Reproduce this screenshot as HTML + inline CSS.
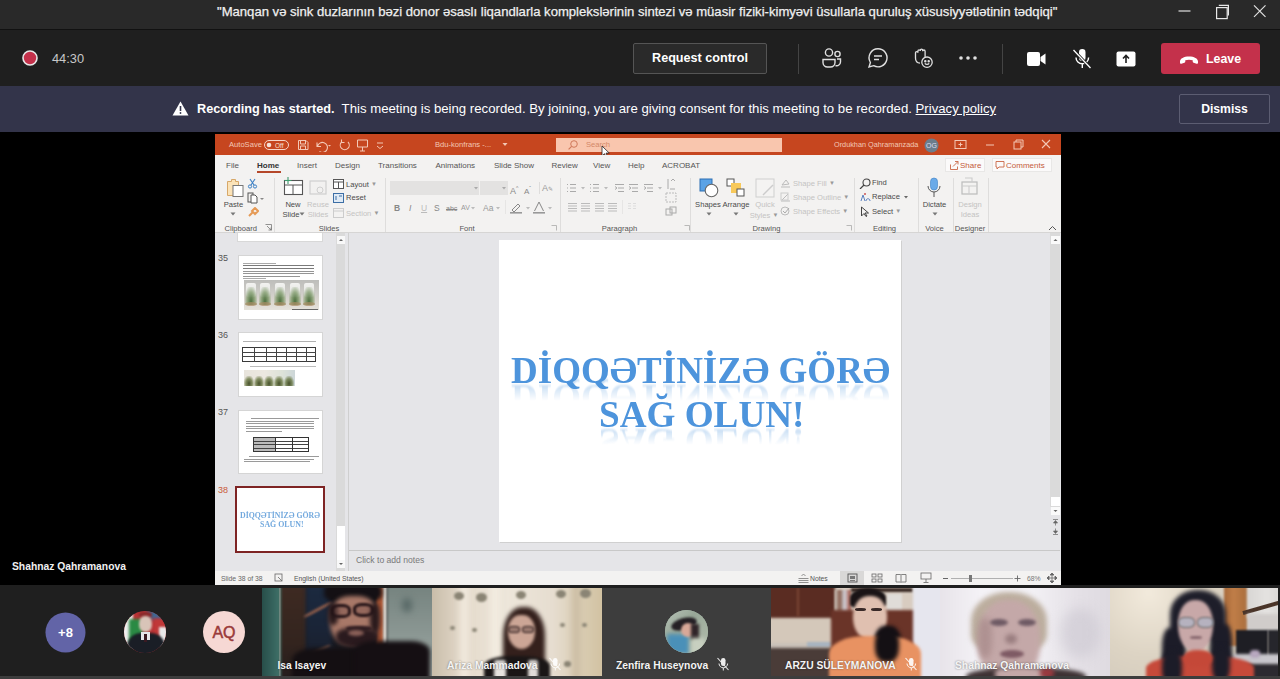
<!DOCTYPE html>
<html><head><meta charset="utf-8"><style>
*{margin:0;padding:0;box-sizing:border-box}
html,body{width:1280px;height:679px;overflow:hidden;background:#000;font-family:"Liberation Sans",sans-serif}
.a{position:absolute}
.t{white-space:nowrap}
svg{display:block}
.bl{filter:blur(.45px)}

#title{left:0;top:0;width:1280px;height:29px;background:#292929;color:#e6e6e6;font-size:14px}
#ctrl{left:0;top:29px;width:1280px;height:57px;background:#1f1f1f;border-top:1px solid #111}
#banner{left:0;top:86px;width:1280px;height:46px;background:#33344a;color:#fff;font-size:14px}
</style></head><body>
<div id="title" class="a">
  <div id="ttl" class="a" style="left:217px;top:4px;white-space:nowrap;font-size:13.1px;color:#f0f0f0;-webkit-text-stroke:.25px #f0f0f0">"Manqan və sink duzlarının bəzi donor əsaslı liqandlarla komplekslərinin sintezi və müasir fiziki-kimyəvi üsullarla quruluş xüsusiyyətlətinin tədqiqi"</div>
  <svg class="a" style="left:1176px;top:0px" width="20" height="20"><path d="M2.5 11h12" stroke="#e0e0e0" stroke-width="1.2"/></svg>
  <svg class="a" style="left:1214px;top:2px" width="20" height="20"><rect x="2.6" y="5.6" width="10.6" height="11" fill="none" stroke="#e8e8e8" stroke-width="1.2"/><path d="M4.8 3.4h9.6v10" fill="none" stroke="#e8e8e8" stroke-width="1.2"/></svg>
  <svg class="a" style="left:1252px;top:3px" width="16" height="16"><path d="M2 2.3l11.5 11.5M13.5 2.3L2 13.8" stroke="#e0e0e0" stroke-width="1.2"/></svg>
</div>
<div id="ctrl" class="a">
  <svg class="a" style="left:21px;top:19px" width="18" height="18"><circle cx="9" cy="9" r="7" fill="#c4314b" stroke="#e8e8e8" stroke-width="1.6"/></svg>
  <div class="a" style="left:52px;top:21px;font-size:12.8px;color:#c8c8c8">44:30</div>
  <div id="reqbtn" class="a" style="left:633px;top:13px;width:134px;height:31px;border:1px solid #555;background:#2a2a2a;border-radius:2px;color:#fff;font-weight:bold;font-size:12.6px;text-align:center;line-height:29px">Request control</div>
  <div class="a" style="left:798px;top:14px;width:1px;height:30px;background:#444"></div>
  <!-- participants -->
  <svg class="a" style="left:820px;top:16px" width="24" height="24" fill="none" stroke="#e0e0e0" stroke-width="1.4"><circle cx="9" cy="6.5" r="3.6"/><circle cx="17.5" cy="8" r="2.6"/><path d="M3 13.5h12v3a4.5 4.5 0 0 1-4.5 4.5h-3A4.5 4.5 0 0 1 3 16.5z"/><path d="M17 13h3.5v3a3.8 3.8 0 0 1-5 3.5"/></svg>
  <!-- chat -->
  <svg class="a" style="left:866px;top:16px" width="24" height="24" fill="none" stroke="#e0e0e0" stroke-width="1.4"><path d="M12 2.8a9 9 0 1 1-4.3 16.9L3 21l1.4-4.5A9 9 0 0 1 12 2.8z"/><path d="M8 10h8M8 13.5h5"/></svg>
  <!-- reactions -->
  <svg class="a" style="left:911px;top:16px" width="24" height="24" fill="none" stroke="#e0e0e0" stroke-width="1.3"><path d="M4.5 12V6.8a1.2 1.2 0 0 1 2.4 0V5a1.2 1.2 0 0 1 2.4 0V4.4a1.2 1.2 0 0 1 2.4 0V5.2a1.2 1.2 0 0 1 2.4 0V11"/><path d="M4.5 12c0 3 1.6 5 4.5 5.2"/><circle cx="16" cy="16.2" r="5.2"/><circle cx="14.3" cy="15.2" r=".6" fill="#e0e0e0"/><circle cx="17.7" cy="15.2" r=".6" fill="#e0e0e0"/><path d="M13.8 17.3c1.1 1.3 3.3 1.3 4.4 0"/></svg>
  <!-- more -->
  <svg class="a" style="left:956px;top:16px" width="24" height="24" fill="#e0e0e0"><circle cx="5" cy="12" r="1.8"/><circle cx="12" cy="12" r="1.8"/><circle cx="19" cy="12" r="1.8"/></svg>
  <div class="a" style="left:1002px;top:14px;width:1px;height:30px;background:#444"></div>
  <!-- camera -->
  <svg class="a" style="left:1024px;top:17px" width="24" height="24" fill="#fff"><rect x="3" y="5" width="13" height="14" rx="2"/><path d="M16.5 10l5-3.5v11l-5-3.5z"/></svg>
  <!-- mic off -->
  <svg class="a" style="left:1070px;top:17px" width="24" height="24"><rect x="9" y="2" width="6.5" height="12" rx="3.2" fill="#fff"/><path d="M6 10.5a6.3 6.3 0 0 0 12.6 0M12.3 17v4" fill="none" stroke="#fff" stroke-width="1.4"/><path d="M3.5 3l17 18" stroke="#1f1f1f" stroke-width="3"/><path d="M3.5 3l17 18" stroke="#fff" stroke-width="1.3"/></svg>
  <!-- share -->
  <svg class="a" style="left:1114px;top:17px" width="24" height="24"><rect x="2.5" y="4.5" width="19" height="15" rx="2" fill="#fff"/><path d="M12 16V9M9 11.5l3-3 3 3" fill="none" stroke="#1f1f1f" stroke-width="1.6"/></svg>
  <div id="leave" class="a" style="left:1161px;top:13px;width:99px;height:31px;background:#c4314b;border-radius:3px;color:#fff;font-weight:bold;font-size:12.4px;line-height:31px">
    <svg class="a" style="left:17px;top:8px" width="22" height="16"><path d="M2 10.5c0-3 4-5 9-5s9 2 9 5v1.3c0 .8-.7 1.2-1.4 1l-3-1c-.6-.2-.9-.7-.9-1.3V9.2c-1.1-.3-2.4-.5-3.7-.5s-2.6.2-3.7.5v1.3c0 .6-.3 1.1-.9 1.3l-3 1c-.7.2-1.4-.2-1.4-1z" fill="#fff"/></svg>
    <span class="a" style="left:45px;top:1px">Leave</span>
  </div>
</div>
<div id="banner" class="a">
  <svg class="a" style="left:172px;top:15px" width="17" height="15"><path d="M8.5 0.5L16.5 14.5H0.5z" fill="#fff"/><path d="M8.5 5v5" stroke="#33344a" stroke-width="1.6"/><circle cx="8.5" cy="12" r=".9" fill="#33344a"/></svg>
  <div id="btxt" class="a" style="left:197px;top:15px;white-space:nowrap;font-size:13.2px"><b style="font-size:12.7px">Recording has started.</b>&nbsp; This meeting is being recorded. By joining, you are giving consent for this meeting to be recorded. <u>Privacy policy</u></div>
  <div class="a" style="left:1179px;top:8px;width:91px;height:30px;border:1px solid #5c5d72;border-radius:2px;color:#fff;font-weight:bold;font-size:12.2px;text-align:center;line-height:28px">Dismiss</div>
</div>

<div class="a" style="left:0px;top:132px;width:1280px;height:453px;background:#000;"></div><div class="a t" style="left:12px;top:560.0px;font-size:10.3px;line-height:14px;color:#f0f0f0;font-weight:bold;">Shahnaz Qahramanova</div><div class="a" style="left:215px;top:134px;width:846px;height:451px;background:#e5e5e8;"></div><div class="a" style="left:215px;top:134px;width:846px;height:21px;background:#c6461f;"></div><div class="a t" style="left:229px;top:140.0px;font-size:7.6px;line-height:10px;color:#f3c8b6;font-weight:normal;">AutoSave</div><div class="a" style="left:264px;top:140px;width:25px;height:10px;border:1px solid #f6d5c8;border-radius:6px"></div><svg class="a" style="left:266px;top:142px;" width="6" height="6" viewBox="0 0 6 6"><circle cx="3" cy="3" r="2.3" fill="#f6e0d6"/></svg><div class="a t" style="left:275px;top:140.5px;font-size:6.5px;line-height:9px;color:#f6e0d6;font-weight:normal;">Off</div><svg class="a" style="left:297px;top:139px;" width="12" height="12" viewBox="0 0 12 12"><path d="M1.5 1.5h7.5l2 2v7h-9.5z M3.5 1.5v3.5h5v-3.5 M3.5 10.5v-3.5h5v3.5" fill="none" stroke="#f3c8b6" stroke-width="1"/></svg><svg class="a" style="left:314px;top:138px;" width="24" height="14" viewBox="0 0 24 14"><path d="M3 4.5v4h4 M3.5 8.5a5 5 0 1 1 2 5" fill="none" stroke="#f3c8b6" stroke-width="1.1"/><path d="M14 7h3l-1.5 1.5z" fill="#f3c8b6"/></svg><svg class="a" style="left:338px;top:138px;" width="13" height="14" viewBox="0 0 13 14"><path d="M10 4a4.5 4.5 0 1 1-6.5 0 M3.5 1.5v3h3" fill="none" stroke="#f3c8b6" stroke-width="1.1"/></svg><svg class="a" style="left:356px;top:138px;" width="13" height="14" viewBox="0 0 13 14"><path d="M1.5 2h10v7h-10z M6.5 9v4 M4 13h5" fill="none" stroke="#f3c8b6" stroke-width="1"/></svg><svg class="a" style="left:375px;top:140px;" width="10" height="10" viewBox="0 0 10 10"><path d="M2 3h6 M2 6l3 2.5 3-2.5" fill="none" stroke="#f3c8b6" stroke-width="1"/></svg><div class="a t" style="left:435px;top:140.0px;font-size:7.6px;line-height:10px;color:#f3c8b6;font-weight:normal;">Bdu-konfrans -...</div><svg class="a" style="left:502px;top:142px;" width="6" height="5" viewBox="0 0 6 5"><path d="M0.5 1h5l-2.5 3z" fill="#f3c8b6"/></svg><div class="a" style="left:556px;top:138px;width:226px;height:14px;background:#f9c6ae;"></div><svg class="a" style="left:567px;top:139px;" width="12" height="12" viewBox="0 0 12 12"><circle cx="7" cy="5" r="3.3" fill="none" stroke="#d0795a" stroke-width="1"/><path d="M4.6 7.4l-3 3" stroke="#d0795a" stroke-width="1.1"/></svg><div class="a t" style="left:586px;top:140.0px;font-size:7.6px;line-height:10px;color:#d38868;font-weight:normal;">Search</div><svg class="a" style="left:601px;top:145px;" width="9" height="13" viewBox="0 0 9 13"><path d="M1 1v10l2.5-2.3 1.8 3.8 1.5-.7-1.8-3.7h3.3z" fill="#fff" stroke="#222" stroke-width=".8"/></svg><div class="a t" style="left:834px;top:140.0px;font-size:7.3px;line-height:10px;color:#f3c8b6;font-weight:normal;">Ordukhan Qahramanzada</div><svg class="a" style="left:924px;top:138px;" width="15" height="15" viewBox="0 0 15 15"><circle cx="7.5" cy="7.5" r="7" fill="#6c7d8c"/><text x="7.5" y="10.3" font-size="7" text-anchor="middle" fill="#dde" font-family="Liberation Sans">OG</text></svg><svg class="a" style="left:954px;top:139px;" width="13" height="11" viewBox="0 0 13 11"><rect x="1" y="1.5" width="11" height="8" fill="none" stroke="#f3c8b6" stroke-width="1"/><path d="M6.5 3.5v4 M4.5 5.5h4" stroke="#f3c8b6" stroke-width="1"/></svg><svg class="a" style="left:984px;top:139px;" width="12" height="11" viewBox="0 0 12 11"><path d="M2 6h8" stroke="#f3c8b6" stroke-width="1"/></svg><svg class="a" style="left:1012px;top:139px;" width="12" height="11" viewBox="0 0 12 11"><rect x="2" y="3" width="7" height="7" fill="none" stroke="#f3c8b6" stroke-width="1"/><path d="M4 3v-2h7v7h-2" fill="none" stroke="#f3c8b6" stroke-width="1"/></svg><svg class="a" style="left:1040px;top:139px;" width="12" height="11" viewBox="0 0 12 11"><path d="M2 1l8 8 M10 1l-8 8" stroke="#f3c8b6" stroke-width="1.1"/></svg><div class="a" style="left:215px;top:155px;width:846px;height:78px;background:#f3f2f1;"></div><div class="a" style="left:215px;top:232px;width:846px;height:1px;background:#d6d5d4;"></div><div class="a t" style="left:226px;top:159.5px;font-size:8px;line-height:11px;color:#555;font-weight:normal;">File</div><div class="a t" style="left:257px;top:159.5px;font-size:8px;line-height:11px;color:#333;font-weight:bold;">Home</div><div class="a t" style="left:297px;top:159.5px;font-size:8px;line-height:11px;color:#555;font-weight:normal;">Insert</div><div class="a t" style="left:335px;top:159.5px;font-size:8px;line-height:11px;color:#555;font-weight:normal;">Design</div><div class="a t" style="left:378px;top:159.5px;font-size:8px;line-height:11px;color:#555;font-weight:normal;">Transitions</div><div class="a t" style="left:435.5px;top:159.5px;font-size:8px;line-height:11px;color:#555;font-weight:normal;">Animations</div><div class="a t" style="left:494px;top:159.5px;font-size:8px;line-height:11px;color:#555;font-weight:normal;">Slide Show</div><div class="a t" style="left:551.5px;top:159.5px;font-size:8px;line-height:11px;color:#555;font-weight:normal;">Review</div><div class="a t" style="left:593px;top:159.5px;font-size:8px;line-height:11px;color:#555;font-weight:normal;">View</div><div class="a t" style="left:628px;top:159.5px;font-size:8px;line-height:11px;color:#555;font-weight:normal;">Help</div><div class="a t" style="left:662px;top:159.5px;font-size:8px;line-height:11px;color:#555;font-weight:normal;">ACROBAT</div><div class="a" style="left:257px;top:171px;width:24px;height:2px;background:#b5472a;"></div><div class="a" style="left:945px;top:158px;width:40px;height:14px;background:#fbfafa;border:1px solid #e8e7e6"></div><svg class="a" style="left:949px;top:160px;" width="10" height="10" viewBox="0 0 10 10"><path d="M1.5 4.5v5h7v-3 M4 6.5l5-5 M6 1.5h3v3" fill="none" stroke="#c96646" stroke-width=".9"/></svg><div class="a t" style="left:960px;top:159.5px;font-size:8px;line-height:11px;color:#c45a3a;font-weight:normal;">Share</div><div class="a" style="left:992px;top:158px;width:60px;height:14px;background:#fbfafa;border:1px solid #e8e7e6"></div><svg class="a" style="left:995px;top:160px;" width="10" height="10" viewBox="0 0 10 10"><path d="M1 1.5h8v5.5h-5l-2 2v-2h-1z" fill="none" stroke="#c96646" stroke-width=".9"/></svg><div class="a t" style="left:1006px;top:159.5px;font-size:8px;line-height:11px;color:#c45a3a;font-weight:normal;">Comments</div><svg class="a" style="left:225px;top:178px;" width="20" height="20" viewBox="0 0 20 20"><path d="M2.5 3.5h4v-2h4v2h3v14h-11z" fill="#fbe3b8" stroke="#d7a869" stroke-width="1"/><rect x="8" y="7.5" width="10" height="11" fill="#fff" stroke="#777" stroke-width="1"/></svg><div class="a t" style="left:173.5px;width:120px;text-align:center;top:198.5px;font-size:7.6px;line-height:12px;color:#4a4a4a">Paste</div><svg class="a" style="left:230px;top:212px;" width="6" height="4" viewBox="0 0 6 4"><path d="M0.5 0.5h5l-2.5 3z" fill="#777"/></svg><svg class="a" style="left:247px;top:178px;" width="11" height="11" viewBox="0 0 11 11"><path d="M3 1l4 6 M8 1l-4 6" stroke="#3a7fc4" stroke-width="1.1" fill="none"/><circle cx="3" cy="8.5" r="1.6" fill="none" stroke="#3a7fc4"/><circle cx="8" cy="8.5" r="1.6" fill="none" stroke="#3a7fc4"/></svg><svg class="a" style="left:247px;top:192px;" width="18" height="12" viewBox="0 0 18 12"><rect x="1" y="1" width="5" height="9" fill="none" stroke="#555" stroke-width="1"/><path d="M4 3h4l2 2v6h-6z" fill="#fff" stroke="#555" stroke-width="1"/><path d="M13 6h4l-2 2z" fill="#888"/></svg><svg class="a" style="left:247px;top:207px;" width="12" height="11" viewBox="0 0 12 11"><path d="M2 9l4-4 M5 4l3-3 3 3-3 3z" stroke="#e59a55" stroke-width="2" fill="none"/></svg><div class="a t" style="left:224.5px;top:224.0px;font-size:7.6px;line-height:10px;color:#555;font-weight:normal;">Clipboard</div><svg class="a" style="left:265px;top:224px;" width="7" height="7" viewBox="0 0 7 7"><path d="M.5 .5h6v6 M2 2l4 4 M6 3.5v2.5h-2.5" fill="none" stroke="#777" stroke-width=".8"/></svg><div class="a" style="left:274px;top:178px;width:1px;height:54px;background:#dedddc;"></div><svg class="a" style="left:283px;top:176px;" width="21" height="20" viewBox="0 0 21 20"><rect x="1.5" y="4.5" width="18" height="14" fill="#fff" stroke="#555" stroke-width="1.1"/><path d="M1.5 9h18 M10 9v9.5" stroke="#555" stroke-width="1"/><path d="M5 1v7 M1.5 4.5h7" stroke="#3f9c6e" stroke-width="1.1"/></svg><div class="a t" style="left:233px;width:120px;text-align:center;top:198.5px;font-size:7.6px;line-height:12px;color:#4a4a4a">New</div><div class="a t" style="left:231px;width:120px;text-align:center;top:208.5px;font-size:7.6px;line-height:12px;color:#4a4a4a">Slide</div><svg class="a" style="left:299px;top:212px;" width="6" height="4" viewBox="0 0 6 4"><path d="M0.5 0.5h5l-2.5 3z" fill="#777"/></svg><svg class="a" style="left:309px;top:180px;" width="19" height="16" viewBox="0 0 19 16"><rect x="1" y="1" width="16" height="13" fill="#f2f1f0" stroke="#cfcfcf" stroke-width="1.2"/><circle cx="11" cy="10" r="3" fill="none" stroke="#cfcfcf"/></svg><div class="a t" style="left:258px;width:120px;text-align:center;top:198.5px;font-size:7.6px;line-height:12px;color:#c4c3c2">Reuse</div><div class="a t" style="left:258px;width:120px;text-align:center;top:208.5px;font-size:7.6px;line-height:12px;color:#c4c3c2">Slides</div><svg class="a" style="left:333px;top:179px;" width="11" height="10" viewBox="0 0 11 10"><rect x=".5" y=".5" width="10" height="9" fill="#fff" stroke="#555"/><path d="M.5 3h10 M5.5 3v6.5" stroke="#555"/></svg><div class="a t" style="left:346px;top:179.0px;font-size:7.6px;line-height:10px;color:#4a4a4a;font-weight:normal;">Layout <span style="font-size:6px;color:#999;vertical-align:1px">▼</span></div><svg class="a" style="left:333px;top:193px;" width="11" height="10" viewBox="0 0 11 10"><rect x=".5" y=".5" width="10" height="9" fill="#dfeaf5" stroke="#3c6ea5"/><path d="M3 3v4 M6 3h3" stroke="#3c6ea5"/></svg><div class="a t" style="left:346px;top:193.0px;font-size:7.6px;line-height:10px;color:#4a4a4a;font-weight:normal;">Reset</div><svg class="a" style="left:333px;top:208px;" width="11" height="10" viewBox="0 0 11 10"><rect x=".5" y=".5" width="10" height="9" fill="none" stroke="#ccc"/><path d="M.5 3h10" stroke="#ccc"/></svg><div class="a t" style="left:346px;top:208.0px;font-size:7.6px;line-height:10px;color:#c4c3c2;font-weight:normal;">Section <span style="font-size:6px;color:#999;vertical-align:1px">▼</span></div><div class="a t" style="left:269px;width:120px;text-align:center;top:223px;font-size:7.6px;line-height:12px;color:#555">Slides</div><div class="a" style="left:385px;top:178px;width:1px;height:54px;background:#dedddc;"></div><div class="a" style="left:390px;top:181px;width:89px;height:14px;background:#e3e2e1;"></div><div class="a" style="left:480px;top:181px;width:28px;height:14px;background:#e3e2e1;"></div><svg class="a" style="left:474px;top:187px;" width="5" height="3" viewBox="0 0 5 3"><path d="M0 0h4l-2 2.5z" fill="#aaa"/></svg><svg class="a" style="left:502px;top:187px;" width="5" height="3" viewBox="0 0 5 3"><path d="M0 0h4l-2 2.5z" fill="#aaa"/></svg><div class="a t" style="left:510px;top:182.0px;font-size:9px;line-height:12px;color:#888;font-weight:normal;">A<sup style="font-size:5px">^</sup></div><div class="a t" style="left:524px;top:182.5px;font-size:8px;line-height:11px;color:#888;font-weight:normal;">A<sup style="font-size:5px">ˇ</sup></div><div class="a" style="left:539px;top:182px;width:1px;height:12px;background:#dedddc;"></div><div class="a t" style="left:542px;top:182.0px;font-size:9px;line-height:12px;color:#999;font-weight:normal;">A<span style="font-size:6px">✎</span></div><div class="a t" style="left:394px;top:202.5px;font-size:8.5px;line-height:11px;color:#888;font-weight:bold;">B</div><div class="a t" style="left:409px;top:202.5px;font-size:8.5px;line-height:11px;color:#888;font-weight:normal;"><i>I</i></div><div class="a t" style="left:421px;top:202.5px;font-size:8.5px;line-height:11px;color:#bbb;font-weight:normal;"><u>U</u></div><div class="a t" style="left:434px;top:202.5px;font-size:8.5px;line-height:11px;color:#888;font-weight:normal;">S</div><div class="a t" style="left:446px;top:203.5px;font-size:7px;line-height:9px;color:#888;font-weight:normal;"><s>abc</s></div><div class="a t" style="left:461px;top:202.5px;font-size:7px;line-height:9px;color:#999;font-weight:normal;">AV</div><svg class="a" style="left:471px;top:207px;" width="5" height="3" viewBox="0 0 5 3"><path d="M0 0h4l-2 2.5z" fill="#bbb"/></svg><div class="a t" style="left:483px;top:202.5px;font-size:8.5px;line-height:11px;color:#999;font-weight:normal;">Aa</div><svg class="a" style="left:496px;top:207px;" width="5" height="3" viewBox="0 0 5 3"><path d="M0 0h4l-2 2.5z" fill="#bbb"/></svg><div class="a" style="left:505px;top:200px;width:1px;height:14px;background:#e6e5e4;"></div><svg class="a" style="left:509px;top:201px;" width="14" height="13" viewBox="0 0 14 13"><path d="M3 9l6-6 2 2-6 6z" fill="none" stroke="#888" stroke-width="1"/><rect x="1" y="11" width="12" height="1.6" fill="#999"/></svg><svg class="a" style="left:526px;top:207px;" width="5" height="3" viewBox="0 0 5 3"><path d="M0 0h4l-2 2.5z" fill="#bbb"/></svg><svg class="a" style="left:532px;top:201px;" width="14" height="13" viewBox="0 0 14 13"><path d="M2.5 10l4.5-9 4.5 9" fill="none" stroke="#888" stroke-width="1"/><rect x="1" y="11" width="12" height="1.6" fill="#999"/></svg><svg class="a" style="left:548px;top:207px;" width="5" height="3" viewBox="0 0 5 3"><path d="M0 0h4l-2 2.5z" fill="#bbb"/></svg><div class="a t" style="left:407px;width:120px;text-align:center;top:223px;font-size:7.6px;line-height:12px;color:#555">Font</div><svg class="a" style="left:551px;top:225px;" width="6" height="6" viewBox="0 0 6 6"><path d="M.5 .5h5v5" fill="none" stroke="#aaa" stroke-width=".8"/></svg><div class="a" style="left:559.5px;top:178px;width:1px;height:54px;background:#dedddc;"></div><svg class="a" style="left:566px;top:183px;" width="11" height="10" viewBox="0 0 11 10"><path d="M1 1.5h1 M1 5h1 M1 8.5h1 M4 1.5h6 M4 5h6 M4 8.5h6" stroke="#aaa" stroke-width="1"/></svg><svg class="a" style="left:581px;top:187px;" width="5" height="3" viewBox="0 0 5 3"><path d="M0 0h4l-2 2.5z" fill="#bbb"/></svg><svg class="a" style="left:589px;top:183px;" width="11" height="10" viewBox="0 0 11 10"><path d="M1 1.5h1 M1 5h1 M1 8.5h1 M4 1.5h6 M4 5h6 M4 8.5h6" stroke="#aaa" stroke-width="1"/></svg><svg class="a" style="left:604px;top:187px;" width="5" height="3" viewBox="0 0 5 3"><path d="M0 0h4l-2 2.5z" fill="#bbb"/></svg><svg class="a" style="left:614px;top:183px;" width="11" height="10" viewBox="0 0 11 10"><path d="M1 1.5h9 M4 5h6 M4 8.5h6 M1 3.5l2 1.5-2 1.5" stroke="#aaa" stroke-width="1" fill="none"/></svg><svg class="a" style="left:628px;top:183px;" width="11" height="10" viewBox="0 0 11 10"><path d="M1 1.5h9 M4 5h6 M4 8.5h6 M1 3.5l2 1.5-2 1.5" stroke="#aaa" stroke-width="1" fill="none"/></svg><svg class="a" style="left:643px;top:183px;" width="11" height="10" viewBox="0 0 11 10"><path d="M1 1.5h9 M4 5h6 M4 8.5h6 M1 3.5l2 1.5-2 1.5" stroke="#aaa" stroke-width="1" fill="none"/></svg><svg class="a" style="left:658px;top:187px;" width="5" height="3" viewBox="0 0 5 3"><path d="M0 0h4l-2 2.5z" fill="#bbb"/></svg><svg class="a" style="left:666px;top:178px;" width="10" height="12" viewBox="0 0 10 12"><path d="M2 1v10 M5 3l2-2 2 2 M4 11h5" stroke="#aaa" fill="none"/></svg><svg class="a" style="left:665px;top:192px;" width="12" height="11" viewBox="0 0 12 11"><rect x="1" y="1" width="10" height="9" fill="none" stroke="#bbb" stroke-dasharray="2 1"/></svg><svg class="a" style="left:665px;top:206px;" width="12" height="11" viewBox="0 0 12 11"><rect x="1" y="3" width="6" height="6" fill="none" stroke="#aaa"/><rect x="5" y="1" width="6" height="6" fill="none" stroke="#aaa"/></svg><svg class="a" style="left:567px;top:202px;" width="11" height="10" viewBox="0 0 11 10"><path d="M1 1.5h9 M1 4h9 M1 6.5h9 M1 9h9" stroke="#bbb" stroke-width="1"/></svg><svg class="a" style="left:580px;top:202px;" width="11" height="10" viewBox="0 0 11 10"><path d="M1 1.5h9 M1 4h9 M1 6.5h9 M1 9h9" stroke="#bbb" stroke-width="1"/></svg><svg class="a" style="left:594px;top:202px;" width="11" height="10" viewBox="0 0 11 10"><path d="M1 1.5h9 M1 4h9 M1 6.5h9 M1 9h9" stroke="#bbb" stroke-width="1"/></svg><svg class="a" style="left:607px;top:202px;" width="11" height="10" viewBox="0 0 11 10"><path d="M1 1.5h9 M1 4h9 M1 6.5h9 M1 9h9" stroke="#bbb" stroke-width="1"/></svg><div class="a" style="left:622px;top:200px;width:1px;height:14px;background:#e6e5e4;"></div><svg class="a" style="left:627px;top:202px;" width="10" height="10" viewBox="0 0 10 10"><path d="M1 1.5h3 M6 1.5h3 M1 4h3 M6 4h3 M1 6.5h3 M6 6.5h3" stroke="#ddd"/></svg><div class="a t" style="left:559.5px;width:120px;text-align:center;top:223px;font-size:7.6px;line-height:12px;color:#555">Paragraph</div><svg class="a" style="left:684px;top:225px;" width="6" height="6" viewBox="0 0 6 6"><path d="M.5 .5h5v5" fill="none" stroke="#aaa" stroke-width=".8"/></svg><div class="a" style="left:690px;top:178px;width:1px;height:54px;background:#dedddc;"></div><svg class="a" style="left:699px;top:178px;" width="20" height="20" viewBox="0 0 20 20"><rect x="1" y="1" width="12" height="12" fill="#5ba3e6" stroke="#2c6fb3" stroke-width="1"/><circle cx="12.5" cy="12.5" r="6.3" fill="#fff" stroke="#666" stroke-width="1.1"/></svg><div class="a t" style="left:648px;width:120px;text-align:center;top:198.5px;font-size:7.6px;line-height:12px;color:#4a4a4a">Shapes</div><svg class="a" style="left:706px;top:212px;" width="6" height="4" viewBox="0 0 6 4"><path d="M0.5 0.5h5l-2.5 3z" fill="#777"/></svg><svg class="a" style="left:726px;top:178px;" width="20" height="20" viewBox="0 0 20 20"><rect x="1" y="1" width="7" height="7" fill="#fff" stroke="#555" stroke-width="1"/><rect x="5" y="5" width="10" height="10" fill="#f8c95a"/><rect x="11" y="11" width="7" height="7" fill="#fff" stroke="#555" stroke-width="1"/></svg><div class="a t" style="left:676px;width:120px;text-align:center;top:198.5px;font-size:7.6px;line-height:12px;color:#4a4a4a">Arrange</div><svg class="a" style="left:733px;top:212px;" width="6" height="4" viewBox="0 0 6 4"><path d="M0.5 0.5h5l-2.5 3z" fill="#777"/></svg><svg class="a" style="left:755px;top:178px;" width="20" height="20" viewBox="0 0 20 20"><rect x="1" y="1" width="18" height="18" fill="#f4f3f2" stroke="#cfcfcf" stroke-width="1"/><path d="M8 17l10-10" stroke="#ccc" stroke-width="1.5"/></svg><div class="a t" style="left:705px;width:120px;text-align:center;top:198.5px;font-size:7.6px;line-height:12px;color:#c4c3c2">Quick</div><div class="a t" style="left:704px;width:120px;text-align:center;top:208.5px;font-size:7.6px;line-height:12px;color:#c4c3c2">Styles <span style="font-size:6px;color:#999;vertical-align:1px">▼</span></div><svg class="a" style="left:780px;top:178px;" width="11" height="10" viewBox="0 0 11 10"><path d="M2 7l4-5 3 4z M1 9h9" stroke="#bbb" fill="none"/></svg><div class="a t" style="left:793px;top:178.0px;font-size:7.6px;line-height:10px;color:#c4c3c2;font-weight:normal;">Shape Fill <span style="font-size:6px;color:#999;vertical-align:1px">▼</span></div><svg class="a" style="left:780px;top:192px;" width="11" height="10" viewBox="0 0 11 10"><path d="M2 8l6-6 M1 9h9" stroke="#bbb" fill="none"/><rect x="1" y="1" width="7" height="7" fill="none" stroke="#ccc"/></svg><div class="a t" style="left:793px;top:192.0px;font-size:7.6px;line-height:10px;color:#c4c3c2;font-weight:normal;">Shape Outline <span style="font-size:6px;color:#999;vertical-align:1px">▼</span></div><svg class="a" style="left:780px;top:206px;" width="11" height="10" viewBox="0 0 11 10"><circle cx="5" cy="5" r="4" fill="none" stroke="#bbb"/><path d="M3 5l2 2 4-5" stroke="#aaa" fill="none"/></svg><div class="a t" style="left:793px;top:206.0px;font-size:7.6px;line-height:10px;color:#c4c3c2;font-weight:normal;">Shape Effects <span style="font-size:6px;color:#999;vertical-align:1px">▼</span></div><div class="a t" style="left:706.5px;width:120px;text-align:center;top:223px;font-size:7.6px;line-height:12px;color:#555">Drawing</div><svg class="a" style="left:846px;top:225px;" width="6" height="6" viewBox="0 0 6 6"><path d="M.5 .5h5v5" fill="none" stroke="#aaa" stroke-width=".8"/></svg><div class="a" style="left:853.5px;top:178px;width:1px;height:54px;background:#dedddc;"></div><svg class="a" style="left:859px;top:178px;" width="12" height="11" viewBox="0 0 12 11"><circle cx="7.5" cy="4.5" r="3.5" fill="none" stroke="#444" stroke-width="1.1"/><path d="M5 7l-4 4" stroke="#444" stroke-width="1.2"/></svg><div class="a t" style="left:872px;top:178.0px;font-size:7.6px;line-height:10px;color:#4a4a4a;font-weight:normal;">Find</div><svg class="a" style="left:859px;top:192px;" width="12" height="12" viewBox="0 0 12 12"><path d="M2 9l2-6 2 6 M7 9c0-3 4-3 4 0" fill="none" stroke="#5a7fbf" stroke-width="1"/><circle cx="6" cy="2" r="1" fill="#c55"/></svg><div class="a t" style="left:872px;top:192.0px;font-size:7.6px;line-height:10px;color:#4a4a4a;font-weight:normal;">Replace</div><svg class="a" style="left:904px;top:196px;" width="5" height="3" viewBox="0 0 5 3"><path d="M0 0h4l-2 2.5z" fill="#666"/></svg><svg class="a" style="left:860px;top:206px;" width="10" height="11" viewBox="0 0 10 11"><path d="M1.5 1v9l2.5-2.5 2 3 1-.5-2-3h3.5z" fill="none" stroke="#444" stroke-width="1"/></svg><div class="a t" style="left:872px;top:206.0px;font-size:7.6px;line-height:10px;color:#4a4a4a;font-weight:normal;">Select <span style="font-size:6px;color:#999;vertical-align:1px">▼</span></div><div class="a t" style="left:824.5px;width:120px;text-align:center;top:223px;font-size:7.6px;line-height:12px;color:#555">Editing</div><div class="a" style="left:917.5px;top:178px;width:1px;height:54px;background:#dedddc;"></div><svg class="a" style="left:926px;top:177px;" width="16" height="22" viewBox="0 0 16 22"><rect x="4.5" y="1" width="7" height="12" rx="3.5" fill="#6aaae8" stroke="#3a7fc4" stroke-width=".6"/><path d="M2 9a6 6 0 0 0 12 0 M8 15v5" fill="none" stroke="#555" stroke-width="1"/></svg><div class="a t" style="left:874.5px;width:120px;text-align:center;top:198.5px;font-size:7.6px;line-height:12px;color:#4a4a4a">Dictate</div><svg class="a" style="left:932px;top:212px;" width="6" height="4" viewBox="0 0 6 4"><path d="M0.5 0.5h5l-2.5 3z" fill="#777"/></svg><div class="a t" style="left:874.5px;width:120px;text-align:center;top:223px;font-size:7.6px;line-height:12px;color:#555">Voice</div><div class="a" style="left:953px;top:178px;width:1px;height:54px;background:#dedddc;"></div><svg class="a" style="left:960px;top:177px;" width="19" height="18" viewBox="0 0 19 18"><rect x="2" y="5" width="15" height="12" fill="none" stroke="#bbb" stroke-width="1.2"/><path d="M2 9h15 M9 9v8 M5 1h7v4" fill="none" stroke="#ccc" stroke-width="1.1"/></svg><div class="a t" style="left:910px;width:120px;text-align:center;top:198.5px;font-size:7.6px;line-height:12px;color:#c4c3c2">Design</div><div class="a t" style="left:910px;width:120px;text-align:center;top:208.5px;font-size:7.6px;line-height:12px;color:#c4c3c2">Ideas</div><div class="a t" style="left:910px;width:120px;text-align:center;top:223px;font-size:7.6px;line-height:12px;color:#555">Designer</div><div class="a" style="left:987.5px;top:178px;width:1px;height:54px;background:#dedddc;"></div><svg class="a" style="left:1048px;top:225px;" width="9" height="6" viewBox="0 0 9 6"><path d="M1 5l3.5-3.5 3.5 3.5" fill="none" stroke="#555" stroke-width="1"/></svg><div class="a" style="left:215px;top:233px;width:846px;height:338px;background:#e5e5e8;"></div><div class="a" style="left:237px;top:233px;width:86px;height:9px;background:#fff;border:1px solid #d8d8d8;border-top:none"></div><div class="a t" style="left:218px;top:252.0px;font-size:9px;line-height:12px;color:#555;font-weight:normal;">35</div><div class="a t" style="left:218px;top:329.0px;font-size:9px;line-height:12px;color:#555;font-weight:normal;">36</div><div class="a t" style="left:218px;top:406.0px;font-size:9px;line-height:12px;color:#555;font-weight:normal;">37</div><div class="a t" style="left:218px;top:484.0px;font-size:9px;line-height:12px;color:#c95a3a;font-weight:normal;">38</div><div class="a" style="left:238px;top:255px;width:85px;height:65px;background:#fff;border:1px solid #d5d5d5"><div class="a bl" style="left:0;top:0;width:83px;height:63px"><div class="a" style="left:4px;top:6.5px;width:33px;height:1px;background:#aaa"></div><div class="a" style="left:4px;top:9.3px;width:71px;height:1px;background:#7a7a7a"></div><div class="a" style="left:4px;top:11.9px;width:71px;height:1px;background:#7a7a7a"></div><div class="a" style="left:4px;top:14.5px;width:71px;height:1px;background:#959595"></div><div class="a" style="left:4px;top:17.1px;width:71px;height:1px;background:#959595"></div><div class="a" style="left:4px;top:19.7px;width:57px;height:1px;background:#959595"></div><div class="a" style="left:4px;top:22.2px;width:23px;height:1px;background:#aaa"></div><div class="a" style="left:4.5px;top:24px;width:75px;height:30px;background:linear-gradient(#bdbdba,#cfcdc8 45%,#dcd8d0 75%,#e6e3dc)"></div><div class="a" style="left:7px;top:27px;width:10px;height:14px;background:linear-gradient(#f2f2f0,#e0e0dc);border-radius:2px;filter:blur(.6px)"></div><div class="a" style="left:6px;top:31px;width:12px;height:18px;background:radial-gradient(ellipse at 50% 80%,rgba(60,100,45,.9),rgba(100,135,75,.6) 45%,rgba(160,170,140,0) 80%);filter:blur(.5px)"></div><div class="a" style="left:6px;top:46px;width:12px;height:4px;background:rgba(170,140,100,.7);border-radius:50%;filter:blur(.6px)"></div><div class="a" style="left:21px;top:27px;width:10px;height:14px;background:linear-gradient(#f2f2f0,#e0e0dc);border-radius:2px;filter:blur(.6px)"></div><div class="a" style="left:20px;top:31px;width:12px;height:18px;background:radial-gradient(ellipse at 50% 80%,rgba(60,100,45,.9),rgba(100,135,75,.6) 45%,rgba(160,170,140,0) 80%);filter:blur(.5px)"></div><div class="a" style="left:20px;top:46px;width:12px;height:4px;background:rgba(170,140,100,.7);border-radius:50%;filter:blur(.6px)"></div><div class="a" style="left:36px;top:27px;width:10px;height:14px;background:linear-gradient(#f2f2f0,#e0e0dc);border-radius:2px;filter:blur(.6px)"></div><div class="a" style="left:35px;top:31px;width:12px;height:18px;background:radial-gradient(ellipse at 50% 80%,rgba(60,100,45,.9),rgba(100,135,75,.6) 45%,rgba(160,170,140,0) 80%);filter:blur(.5px)"></div><div class="a" style="left:35px;top:46px;width:12px;height:4px;background:rgba(170,140,100,.7);border-radius:50%;filter:blur(.6px)"></div><div class="a" style="left:51px;top:27px;width:10px;height:14px;background:linear-gradient(#f2f2f0,#e0e0dc);border-radius:2px;filter:blur(.6px)"></div><div class="a" style="left:50px;top:31px;width:12px;height:18px;background:radial-gradient(ellipse at 50% 80%,rgba(60,100,45,.9),rgba(100,135,75,.6) 45%,rgba(160,170,140,0) 80%);filter:blur(.5px)"></div><div class="a" style="left:50px;top:46px;width:12px;height:4px;background:rgba(170,140,100,.7);border-radius:50%;filter:blur(.6px)"></div><div class="a" style="left:65px;top:27px;width:10px;height:14px;background:linear-gradient(#f2f2f0,#e0e0dc);border-radius:2px;filter:blur(.6px)"></div><div class="a" style="left:64px;top:31px;width:12px;height:18px;background:radial-gradient(ellipse at 50% 80%,rgba(60,100,45,.9),rgba(100,135,75,.6) 45%,rgba(160,170,140,0) 80%);filter:blur(.5px)"></div><div class="a" style="left:64px;top:46px;width:12px;height:4px;background:rgba(170,140,100,.7);border-radius:50%;filter:blur(.6px)"></div><div class="a" style="left:53px;top:53.2px;width:26px;height:1px;background:#666"></div></div></div><div class="a" style="left:238px;top:332px;width:85px;height:65px;background:#fff;border:1px solid #d5d5d5"><div class="a bl" style="left:0;top:0;width:83px;height:63px"><div class="a" style="left:4px;top:7.7px;width:73px;height:1px;background:#b0b0b0"></div><div class="a" style="left:3px;top:13.5px;width:74px;height:15px;border:1px solid #3a3a3a"></div><div class="a" style="left:3px;top:18.5px;width:74px;height:1px;background:#444"></div><div class="a" style="left:3px;top:23.3px;width:74px;height:1px;background:#444"></div><div class="a" style="left:15px;top:13.5px;width:1px;height:15px;background:#444"></div><div class="a" style="left:27px;top:13.5px;width:1px;height:15px;background:#444"></div><div class="a" style="left:37px;top:13.5px;width:1px;height:15px;background:#444"></div><div class="a" style="left:47px;top:13.5px;width:1px;height:15px;background:#444"></div><div class="a" style="left:57px;top:13.5px;width:1px;height:15px;background:#444"></div><div class="a" style="left:67px;top:13.5px;width:1px;height:15px;background:#444"></div><div class="a" style="left:11px;top:32.5px;width:66px;height:1px;background:#bbb"></div><div class="a" style="left:4.5px;top:37px;width:51px;height:16px;background:linear-gradient(90deg,#e8e4dc,#ece8e0 40%,#dde2d8 75%,#ccd6d8)"></div><div class="a" style="left:5px;top:43px;width:10px;height:10px;background:radial-gradient(ellipse at 50% 75%,rgba(62,74,34,.95),rgba(90,106,48,.7) 45%,rgba(200,190,170,0) 80%)"></div><div class="a" style="left:15px;top:43px;width:10px;height:10px;background:radial-gradient(ellipse at 50% 75%,rgba(62,74,34,.95),rgba(90,106,48,.7) 45%,rgba(200,190,170,0) 80%)"></div><div class="a" style="left:25px;top:43px;width:10px;height:10px;background:radial-gradient(ellipse at 50% 75%,rgba(62,74,34,.95),rgba(90,106,48,.7) 45%,rgba(200,190,170,0) 80%)"></div><div class="a" style="left:35px;top:43px;width:10px;height:10px;background:radial-gradient(ellipse at 50% 75%,rgba(62,74,34,.95),rgba(90,106,48,.7) 45%,rgba(200,190,170,0) 80%)"></div><div class="a" style="left:45px;top:43px;width:10px;height:10px;background:radial-gradient(ellipse at 50% 75%,rgba(62,74,34,.95),rgba(90,106,48,.7) 45%,rgba(200,190,170,0) 80%)"></div></div></div><div class="a" style="left:238px;top:410px;width:85px;height:64px;background:#fff;border:1px solid #d5d5d5"><div class="a bl" style="left:0;top:0;width:83px;height:62px"><div class="a" style="left:12px;top:7.0px;width:68px;height:1.1px;background:#9a9a9a"></div><div class="a" style="left:7px;top:9.6px;width:68px;height:1.1px;background:#9a9a9a"></div><div class="a" style="left:7px;top:12.2px;width:68px;height:1.1px;background:#9a9a9a"></div><div class="a" style="left:7px;top:14.8px;width:68px;height:1.1px;background:#9a9a9a"></div><div class="a" style="left:7px;top:17.4px;width:68px;height:1.1px;background:#9a9a9a"></div><div class="a" style="left:7px;top:20.0px;width:36px;height:1.1px;background:#9a9a9a"></div><div class="a" style="left:14px;top:26px;width:56px;height:15px;border:1px solid #333;background:repeating-linear-gradient(transparent 0 2.6px,#444 2.6px 3.6px)"></div><div class="a" style="left:14px;top:26px;width:22px;height:15px;background:rgba(60,60,60,.35)"></div><div class="a" style="left:36px;top:26px;width:1px;height:15px;background:#333"></div><div class="a" style="left:53px;top:26px;width:1px;height:15px;background:#333"></div><div class="a" style="left:10px;top:45.0px;width:70px;height:1.1px;background:#9a9a9a"></div><div class="a" style="left:5px;top:47.6px;width:70px;height:1.1px;background:#9a9a9a"></div><div class="a" style="left:5px;top:50.2px;width:66px;height:1.1px;background:#9a9a9a"></div></div></div><div class="a" style="left:235px;top:486px;width:90px;height:67px;background:#fff;border:2px solid #7e2424"></div><div class="a" style="left:336px;top:233px;width:9px;height:338px;background:#dadada;"></div><div class="a" style="left:337px;top:236px;width:8px;height:8px;background:#f8f8f8;"><svg width="8" height="8"><path d="M2 5l2-2 2 2z" fill="#666"/></svg></div><div class="a" style="left:337px;top:526px;width:8px;height:34px;background:#fff;"></div><div class="a" style="left:337px;top:560px;width:8px;height:8px;background:#f8f8f8;"><svg width="8" height="8"><path d="M2 3l2 2 2-2z" fill="#666"/></svg></div><div class="a" style="left:348px;top:233px;width:1px;height:338px;background:#cfcfcf;"></div><div class="a" style="left:499px;top:240px;width:402px;height:302px;background:#fff;box-shadow:1px 1px 0 #d0d0d0"></div><div class="a" style="left:1050px;top:233px;width:10px;height:274px;background:#dadada;"></div><div class="a" style="left:1051px;top:236px;width:9px;height:8px;background:#fafafa;"><svg width="9" height="8"><path d="M2.5 5l2-2 2 2z" fill="#666"/></svg></div><div class="a" style="left:1051px;top:497px;width:9px;height:9px;background:#fff;"></div><div class="a" style="left:1051px;top:507px;width:9px;height:8px;background:#fafafa;"><svg width="9" height="8"><path d="M2.5 3l2 2 2-2z" fill="#666"/></svg></div><svg class="a" style="left:1051px;top:518px;" width="9" height="8" viewBox="0 0 9 8"><path d="M2 1.5h5 M4.5 2.5l-2 2.5h4z M4.5 5v2.5" stroke="#666" fill="#666" stroke-width=".7"/></svg><svg class="a" style="left:1051px;top:528px;" width="9" height="8" viewBox="0 0 9 8"><path d="M4.5 .5v2.5 M4.5 5.5l-2-2.5h4z M2 6.5h5" stroke="#666" fill="#666" stroke-width=".7"/></svg><div class="a" style="left:349px;top:550px;width:711px;height:1px;background:#c8c8c8;"></div><div class="a t" style="left:356px;top:554.0px;font-size:8.6px;line-height:12px;color:#7a7a7a;font-weight:normal;">Click to add notes</div><div class="a" style="left:215px;top:571px;width:846px;height:14px;background:#f3f2f1;"></div><div class="a t" style="left:221px;top:573.5px;font-size:6.8px;line-height:9px;color:#666;font-weight:normal;">Slide 38 of 38</div><svg class="a" style="left:274px;top:573px;" width="10" height="9" viewBox="0 0 10 9"><rect x="1" y="1" width="7" height="7" fill="none" stroke="#666" stroke-width=".8"/><path d="M4 4l4 4" stroke="#666" stroke-width=".8"/></svg><div class="a t" style="left:294px;top:573.5px;font-size:6.8px;line-height:9px;color:#555;font-weight:normal;">English (United States)</div><svg class="a" style="left:797px;top:572px;" width="13" height="12" viewBox="0 0 13 12"><path d="M1.5 6.5h10 M1.5 8.5h10 M1.5 10.5h10" stroke="#777" stroke-width=".8"/><path d="M4.5 4l2-2 2 2" fill="none" stroke="#777" stroke-width=".8"/></svg><div class="a t" style="left:810px;top:573.5px;font-size:6.8px;line-height:9px;color:#555;font-weight:normal;">Notes</div><div class="a" style="left:840px;top:571px;width:24px;height:14px;background:#d9d8d7;"></div><svg class="a" style="left:847px;top:573px;" width="11" height="10" viewBox="0 0 11 10"><rect x="1" y="1" width="9" height="8" fill="none" stroke="#555" stroke-width=".9"/><rect x="3" y="3" width="5" height="3" fill="#777"/><path d="M3 7.5h5" stroke="#555" stroke-width=".7"/></svg><svg class="a" style="left:871px;top:573px;" width="12" height="10" viewBox="0 0 12 10"><rect x="1" y="1" width="4" height="3" fill="none" stroke="#666" stroke-width=".8"/><rect x="7" y="1" width="4" height="3" fill="none" stroke="#666" stroke-width=".8"/><rect x="1" y="6" width="4" height="3" fill="none" stroke="#666" stroke-width=".8"/><rect x="7" y="6" width="4" height="3" fill="none" stroke="#666" stroke-width=".8"/></svg><svg class="a" style="left:895px;top:573px;" width="12" height="10" viewBox="0 0 12 10"><path d="M1 1.5h4.5l.5.5.5-.5H11v7.5H6.5l-.5.5-.5-.5H1z M6 2v7" fill="none" stroke="#666" stroke-width=".8"/></svg><svg class="a" style="left:920px;top:572px;" width="12" height="12" viewBox="0 0 12 12"><rect x="1" y="1" width="10" height="6" fill="none" stroke="#666" stroke-width=".8"/><path d="M6 7v3 M3.5 10.5h5" stroke="#666" stroke-width=".8"/></svg><div class="a" style="left:943px;top:578px;width:5px;height:1px;background:#666;"></div><div class="a" style="left:951px;top:578px;width:62px;height:1px;background:#b0b0b0;"></div><div class="a" style="left:969px;top:575px;width:3px;height:7px;background:#777;"></div><svg class="a" style="left:1014px;top:575px;" width="7" height="7" viewBox="0 0 7 7"><path d="M3.5 0.5v6 M0.5 3.5h6" stroke="#666" stroke-width=".9"/></svg><div class="a t" style="left:1027px;top:573.5px;font-size:6.8px;line-height:9px;color:#777;font-weight:normal;">68%</div><svg class="a" style="left:1046px;top:572px;" width="12" height="12" viewBox="0 0 12 12"><path d="M6 1v10 M1 6h10 M6 1l-2 2h4z M6 11l-2-2h4z M1 6l2-2v4z M11 6l-2-2v4z" stroke="#666" fill="#666" stroke-width=".8"/></svg><div id="sl1" class="a t" style="left:511px;top:348.1px;font-size:38.8px;line-height:44.62px;font-family:&quot;Liberation Serif&quot;,serif;font-weight:bold;color:#4d94dc;transform-origin:0 0;transform:scaleX(0.954)">DİQQƏTİNİZƏ GÖRƏ</div><div class="a t" style="left:511px;top:375.3px;font-size:38.8px;line-height:44.62px;font-family:&quot;Liberation Serif&quot;,serif;font-weight:bold;color:#4d94dc;transform-origin:0 50%;transform:scaleX(0.954) scaleY(-1);opacity:.45;-webkit-mask-image:linear-gradient(to top,rgba(0,0,0,1) 0%,rgba(0,0,0,.75) 20%,rgba(0,0,0,0) 58%);filter:blur(.8px)">DİQQƏTİNİZƏ GÖRƏ</div><div id="sl2" class="a t" style="left:598.6px;top:392.1px;font-size:38.8px;line-height:44.62px;font-family:&quot;Liberation Serif&quot;,serif;font-weight:bold;color:#4d94dc;transform-origin:0 0;transform:scaleX(0.958)">SAĞ OLUN!</div><div class="a t" style="left:598.6px;top:419.3px;font-size:38.8px;line-height:44.62px;font-family:&quot;Liberation Serif&quot;,serif;font-weight:bold;color:#4d94dc;transform-origin:0 50%;transform:scaleX(0.958) scaleY(-1);opacity:.45;-webkit-mask-image:linear-gradient(to top,rgba(0,0,0,1) 0%,rgba(0,0,0,.75) 20%,rgba(0,0,0,0) 58%);filter:blur(.8px)">SAĞ OLUN!</div><div class="a t" style="left:240.2px;top:510.8px;font-size:8.2px;line-height:9.43px;font-family:&quot;Liberation Serif&quot;,serif;font-weight:bold;color:#4d94dc;color:#5a9ad8;opacity:0.85;transform-origin:0 0;transform:scaleX(0.954)">DİQQƏTİNİZƏ GÖRƏ</div><div class="a t" style="left:259.5px;top:520.1px;font-size:8.2px;line-height:9.43px;font-family:&quot;Liberation Serif&quot;,serif;font-weight:bold;color:#4d94dc;color:#5a9ad8;opacity:0.85;transform-origin:0 0;transform:scaleX(0.963)">SAĞ OLUN!</div><div class="a" style="left:0px;top:585px;width:1280px;height:94px;background:#1f1f1f;"></div><div class="a" style="left:0px;top:676px;width:1280px;height:3px;background:#3d3d3d;"></div><svg class="a" style="left:45px;top:612px;" width="41" height="41" viewBox="0 0 41 41"><circle cx="20.5" cy="20.5" r="20" fill="#6264a7"/><text x="20.5" y="25" font-size="13" font-weight="bold" text-anchor="middle" fill="#fff" font-family="Liberation Sans">+8</text></svg><div class="a" style="left:124px;top:611px;width:42px;height:42px;border-radius:50%;overflow:hidden;background:#b83234">
<div class="a" style="left:-3px;top:-3px;width:12px;height:48px;background:#f0f0f0;filter:blur(1px)"></div>
<div class="a" style="left:5px;top:8px;width:14px;height:24px;background:#2a8a44;filter:blur(1.5px)"></div>
<div class="a" style="left:24px;top:-4px;width:22px;height:12px;background:#3a6a98;filter:blur(2px)"></div>
<div class="a" style="left:30px;top:8px;width:12px;height:22px;background:#c03838;filter:blur(1.5px)"></div>
<div class="a" style="left:35px;top:16px;width:9px;height:20px;background:#e8e8e8;filter:blur(1.2px)"></div>
<div class="a" style="left:15px;top:1px;width:13px;height:6px;background:#8a2a2a;border-radius:40%;filter:blur(1px)"></div>
<div class="a" style="left:15px;top:5px;width:13px;height:16px;background:#d8c4b8;border-radius:45%;filter:blur(.8px)"></div>
<div class="a" style="left:3px;top:22px;width:38px;height:24px;background:#1a1e26;border-radius:14px 14px 0 0;filter:blur(1px)"></div>
<div class="a" style="left:17px;top:21px;width:9px;height:8px;background:#e6e6ea;filter:blur(.6px)"></div>
<div class="a" style="left:20px;top:23px;width:3px;height:8px;background:#3a1a22;filter:blur(.4px)"></div>
</div><svg class="a" style="left:203px;top:611px;" width="42" height="42" viewBox="0 0 42 42"><circle cx="21" cy="21" r="21" fill="#f6d8d4"/><text x="21" y="26.8" font-size="16" text-anchor="middle" fill="#9a3a3a" stroke="#9a3a3a" stroke-width=".5" font-family="Liberation Sans">AQ</text></svg><div class="a" style="left:262px;top:588px;width:170px;height:88px;overflow:hidden;background:#1a1a20"><div class="a" style="left:-4px;top:-4px;width:26px;height:96px;background:linear-gradient(90deg,#224642,#3a6a62 70%,#4a7a70);border-radius:0;filter:blur(1px);"></div><div class="a" style="left:17px;top:0px;width:2px;height:88px;background:#7a9890;border-radius:0;filter:blur(0.6px);"></div><div class="a" style="left:19px;top:-4px;width:26px;height:96px;background:linear-gradient(#3e2a22,#33241e 60%,#241c1c);border-radius:0;filter:blur(1.5px);"></div><div class="a" style="left:44px;top:-4px;width:26px;height:96px;background:linear-gradient(#1c2a40,#1a2436 50%,#1a1a22);border-radius:0;filter:blur(2px);"></div><div class="a" style="left:40px;top:20px;width:32px;height:3px;background:#8a5a48;border-radius:40%;filter:blur(1px);transform:rotate(-28deg)"></div><div class="a" style="left:40px;top:62px;width:30px;height:3px;background:#6a4a40;border-radius:40%;filter:blur(1px);transform:rotate(-25deg)"></div><div class="a" style="left:114px;top:-4px;width:8px;height:62px;background:#b05a38;border-radius:0;filter:blur(1px);"></div><div class="a" style="left:121px;top:-4px;width:4px;height:60px;background:#e0d8d0;border-radius:0;filter:blur(0.8px);"></div><div class="a" style="left:125px;top:-4px;width:50px;height:96px;background:linear-gradient(#74827e,#8a9692 50%,#a0aaa6);border-radius:0;filter:blur(1.5px);"></div><div class="a" style="left:140px;top:10px;width:10px;height:14px;background:#5a6a68;border-radius:40%;filter:blur(3px);"></div><div class="a" style="left:62px;top:-8px;width:58px;height:24px;background:#141014;border-radius:40%;filter:blur(2px);"></div><div class="a" style="left:68px;top:8px;width:48px;height:50px;background:#a87868;border-radius:40% 40% 45% 45%;filter:blur(2px);"></div><div class="a" style="left:66px;top:15px;width:10px;height:22px;background:#2a1a1c;border-radius:40%;filter:blur(2px);"></div><div class="a" style="left:108px;top:15px;width:10px;height:30px;background:#2a1a1c;border-radius:40%;filter:blur(2px);"></div><div class="a" style="left:69px;top:16px;width:20px;height:14px;background:rgba(120,80,75,.4);border-radius:40%;filter:blur(0.8px);border:3px solid #221216"></div><div class="a" style="left:91px;top:15px;width:21px;height:14px;background:rgba(120,80,75,.4);border-radius:40%;filter:blur(0.8px);border:3px solid #221216"></div><div class="a" style="left:84px;top:38px;width:26px;height:5px;background:#3a2226;border-radius:40%;filter:blur(1.2px);"></div><div class="a" style="left:74px;top:40px;width:42px;height:20px;background:#2a1a1e;border-radius:35% 35% 50% 50%;filter:blur(2.2px);"></div><div class="a" style="left:86px;top:42px;width:16px;height:6px;background:#8a6058;border-radius:50%;filter:blur(1.5px);"></div><div class="a" style="left:30px;top:60px;width:80px;height:40px;background:#140f12;border-radius:30% 30% 0 0;filter:blur(2px);"></div><div class="a" style="left:92px;top:53px;width:76px;height:40px;background:#150f13;border-radius:25% 25% 0 0;filter:blur(2px);"></div></div><div class="a t" style="left:277.5px;top:659.0px;font-size:10.3px;line-height:14px;color:#f4f4f4;font-weight:bold;text-shadow:0 0 2px rgba(0,0,0,.5)">Isa Isayev</div><div class="a" style="left:432px;top:588px;width:170px;height:88px;overflow:hidden;background:#d8ccb8"><div class="a" style="left:-5px;top:-5px;width:180px;height:98px;background:linear-gradient(90deg,#c4b8a4,#e4dacb 20%,#ede6da 45%,#e6ddd0 70%,#d8cbb0 88%,#d0bf9e);border-radius:0;filter:blur(2px);"></div><div class="a" style="left:28px;top:-5px;width:8px;height:98px;background:rgba(255,250,240,.5);border-radius:0;filter:blur(3px);"></div><div class="a" style="left:58px;top:-5px;width:10px;height:98px;background:rgba(255,250,240,.4);border-radius:0;filter:blur(3px);"></div><div class="a" style="left:140px;top:-5px;width:8px;height:98px;background:rgba(180,160,130,.4);border-radius:0;filter:blur(3px);"></div><div class="a" style="left:22px;top:4px;width:10px;height:8.0px;background:#8a8474;border-radius:50%;filter:blur(1.2px);"></div><div class="a" style="left:44px;top:5px;width:11px;height:8.8px;background:#8a8474;border-radius:50%;filter:blur(1.2px);"></div><div class="a" style="left:84px;top:3px;width:10px;height:8.0px;background:#8a8474;border-radius:50%;filter:blur(1.2px);"></div><div class="a" style="left:124px;top:2px;width:10px;height:8.0px;background:#8a8474;border-radius:50%;filter:blur(1.2px);"></div><div class="a" style="left:148px;top:1px;width:11px;height:8.8px;background:#8a8474;border-radius:50%;filter:blur(1.2px);"></div><div class="a" style="left:18px;top:38px;width:5px;height:4.0px;background:#8a8474;border-radius:50%;filter:blur(1.2px);"></div><div class="a" style="left:40px;top:40px;width:5px;height:4.0px;background:#8a8474;border-radius:50%;filter:blur(1.2px);"></div><div class="a" style="left:128px;top:35px;width:5px;height:4.0px;background:#8a8474;border-radius:50%;filter:blur(1.2px);"></div><div class="a" style="left:150px;top:35px;width:5px;height:4.0px;background:#8a8474;border-radius:50%;filter:blur(1.2px);"></div><div class="a" style="left:132px;top:73px;width:7px;height:5.6000000000000005px;background:#8a8474;border-radius:50%;filter:blur(1.2px);"></div><div class="a" style="left:71px;top:19px;width:42px;height:64px;background:#34201c;border-radius:45% 45% 15% 15%;filter:blur(2px);"></div><div class="a" style="left:76px;top:27px;width:27px;height:34px;background:#cca696;border-radius:45% 45% 50% 50%;filter:blur(1.5px);"></div><div class="a" style="left:76px;top:38px;width:12px;height:7px;background:rgba(60,40,40,.35);border-radius:40%;filter:blur(0.8px);border:1.5px solid #2a1a1a"></div><div class="a" style="left:90px;top:38px;width:12px;height:7px;background:rgba(60,40,40,.35);border-radius:40%;filter:blur(0.8px);border:1.5px solid #2a1a1a"></div><div class="a" style="left:52px;top:68px;width:66px;height:24px;background:#1a1616;border-radius:40% 40% 0 0;filter:blur(1.5px);"></div><div class="a" style="left:62px;top:72px;width:12px;height:20px;background:#e8e4e0;border-radius:20%;filter:blur(1.5px);"></div><div class="a" style="left:96px;top:72px;width:10px;height:20px;background:#e0dcd8;border-radius:20%;filter:blur(1.5px);"></div></div><div class="a t" style="left:447px;top:659.0px;font-size:10.3px;line-height:14px;color:#f4f4f4;font-weight:bold;text-shadow:0 0 2px rgba(0,0,0,.5)">Ariza Mammadova</div><svg class="a" style="left:548px;top:656px;opacity:.9" width="14" height="16" viewBox="0 0 14 16"><rect x="5" y="2" width="4.5" height="8" rx="2.2" fill="#fff"/><path d="M3 7.5a4.3 4.3 0 0 0 8.6 0 M7.3 12v2.5" fill="none" stroke="#fff" stroke-width="1"/><path d="M1.5 2l11 12" stroke="#fff" stroke-width="1.1"/></svg><div class="a" style="left:602px;top:588px;width:169px;height:88px;background:#3d3d3d"></div><div class="a" style="left:665px;top:610px;width:43px;height:43px;border-radius:50%;overflow:hidden;background:#9ab0a0">
<div class="a" style="left:-4px;top:-4px;width:51px;height:51px;background:linear-gradient(135deg,#c0c8c0,#98a898 40%,#b8c0b0)"></div>
<div class="a" style="left:2px;top:24px;width:22px;height:20px;background:#4a90b8;filter:blur(2px)"></div>
<div class="a" style="left:6px;top:8px;width:26px;height:12px;background:#252025;border-radius:50%;filter:blur(1px);transform:rotate(-15deg)"></div>
<div class="a" style="left:16px;top:13px;width:14px;height:14px;background:#d8a898;border-radius:50%;filter:blur(1px)"></div>
<div class="a" style="left:26px;top:14px;width:8px;height:16px;background:#302428;filter:blur(1.5px)"></div>
<div class="a" style="left:26px;top:28px;width:14px;height:16px;background:#c8d0c0;filter:blur(2px)"></div>
</div><div class="a t" style="left:616px;top:659.0px;font-size:10.3px;line-height:14px;color:#f4f4f4;font-weight:bold;text-shadow:0 0 2px rgba(0,0,0,.5)">Zenfira Huseynova</div><svg class="a" style="left:716px;top:656px;opacity:.9" width="14" height="16" viewBox="0 0 14 16"><rect x="5" y="2" width="4.5" height="8" rx="2.2" fill="#fff"/><path d="M3 7.5a4.3 4.3 0 0 0 8.6 0 M7.3 12v2.5" fill="none" stroke="#fff" stroke-width="1"/><path d="M1.5 2l11 12" stroke="#fff" stroke-width="1.1"/></svg><div class="a" style="left:771px;top:588px;width:170px;height:88px;overflow:hidden;background:#d8ccc0"><div class="a" style="left:-4px;top:-4px;width:68px;height:36px;background:#5a2c22;border-radius:0;filter:blur(1.5px);"></div><div class="a" style="left:26px;top:0px;width:2px;height:28px;background:#7a4434;border-radius:0;filter:blur(1px);"></div><div class="a" style="left:-4px;top:30px;width:66px;height:30px;background:#d4c8ba;border-radius:0;filter:blur(1.5px);"></div><div class="a" style="left:-4px;top:55px;width:64px;height:6px;background:#c8c0b8;border-radius:0;filter:blur(1.5px);"></div><div class="a" style="left:36px;top:54px;width:24px;height:5px;background:#a8b4c0;border-radius:0;filter:blur(1px);"></div><div class="a" style="left:-4px;top:60px;width:66px;height:32px;background:#4a3c38;border-radius:0;filter:blur(1.5px);"></div><div class="a" style="left:64px;top:2px;width:16px;height:22px;background:linear-gradient(90deg,#c8c0b8,#8a6050 30%,#d0d0d8 60%,#a04a3a);border-radius:0;filter:blur(0.8px);"></div><div class="a" style="left:80px;top:0px;width:62px;height:4px;background:#3a2a24;border-radius:0;filter:blur(1px);"></div><div class="a" style="left:116px;top:6px;width:15px;height:18px;background:#e0dcd8;border-radius:0;filter:blur(1.2px);"></div><div class="a" style="left:60px;top:22px;width:86px;height:50px;background:#6a3428;border-radius:0;filter:blur(1.5px);"></div><div class="a" style="left:142px;top:-4px;width:32px;height:96px;background:#e6e6ee;border-radius:0;filter:blur(1.5px);"></div><div class="a" style="left:79px;top:0px;width:36px;height:20px;background:#1a1416;border-radius:50% 50% 20% 20%;filter:blur(1.2px);"></div><div class="a" style="left:82px;top:8px;width:34px;height:44px;background:#e0c0b0;border-radius:45% 45% 50% 50%;filter:blur(1.5px);"></div><div class="a" style="left:84px;top:20px;width:11px;height:3px;background:#3a2a28;border-radius:40%;filter:blur(0.6px);"></div><div class="a" style="left:100px;top:20px;width:11px;height:3px;background:#3a2a28;border-radius:40%;filter:blur(0.6px);"></div><div class="a" style="left:104px;top:38px;width:26px;height:40px;background:#151015;border-radius:40%;filter:blur(2px);"></div><div class="a" style="left:58px;top:48px;width:92px;height:44px;background:#e89262;border-radius:40% 40% 0 0;filter:blur(1.5px);"></div><div class="a" style="left:104px;top:40px;width:24px;height:34px;background:#141014;border-radius:40% 40% 40% 40%;filter:blur(2px);"></div></div><div class="a t" style="left:785px;top:659.0px;font-size:10.3px;line-height:14px;color:#f4f4f4;font-weight:bold;text-shadow:0 0 2px rgba(0,0,0,.5)">ARZU SÜLEYMANOVA</div><svg class="a" style="left:904px;top:656px;opacity:.9" width="14" height="16" viewBox="0 0 14 16"><rect x="5" y="2" width="4.5" height="8" rx="2.2" fill="#fff"/><path d="M3 7.5a4.3 4.3 0 0 0 8.6 0 M7.3 12v2.5" fill="none" stroke="#fff" stroke-width="1"/><path d="M1.5 2l11 12" stroke="#fff" stroke-width="1.1"/></svg><div class="a" style="left:940px;top:588px;width:170px;height:88px;overflow:hidden;background:#ece8ee"><div class="a" style="left:-5px;top:-5px;width:180px;height:98px;background:linear-gradient(90deg,#e6e2e8,#f4f2f6 25%,#f2f0f4 55%,#e4e0e6 80%,#dedae0);border-radius:0;filter:blur(2px);"></div><div class="a" style="left:120px;top:20px;width:40px;height:50px;background:rgba(200,195,205,.5);border-radius:50%;filter:blur(6px);"></div><div class="a" style="left:31px;top:4px;width:76px;height:60px;background:#bcae9e;border-radius:48% 48% 30% 30%;filter:blur(2.5px);"></div><div class="a" style="left:38px;top:12px;width:62px;height:80px;background:#c4a8a8;border-radius:45% 45% 42% 42%;filter:blur(2.5px);"></div><div class="a" style="left:38px;top:30px;width:14px;height:40px;background:rgba(160,130,130,.6);border-radius:40%;filter:blur(3px);"></div><div class="a" style="left:50px;top:31px;width:18px;height:7px;background:#6e5a64;border-radius:50%;filter:blur(1.6px);"></div><div class="a" style="left:78px;top:31px;width:18px;height:7px;background:#6e5a64;border-radius:50%;filter:blur(1.6px);"></div><div class="a" style="left:65px;top:46px;width:12px;height:10px;background:#9a7e80;border-radius:50%;filter:blur(2px);"></div><div class="a" style="left:60px;top:62px;width:24px;height:8px;background:#7e5a64;border-radius:50%;filter:blur(1.6px);"></div><div class="a" style="left:26px;top:80px;width:120px;height:20px;background:#3e3234;border-radius:40% 40% 0 0;filter:blur(2px);"></div><div class="a" style="left:55px;top:79px;width:50px;height:14px;background:#c4a8a8;border-radius:40%;filter:blur(2px);"></div><div class="a" style="left:100px;top:80px;width:14px;height:10px;background:#9a3a40;border-radius:40%;filter:blur(2px);"></div></div><div class="a t" style="left:955px;top:659.0px;font-size:10.3px;line-height:14px;color:#f4f4f4;font-weight:bold;text-shadow:0 0 2px rgba(0,0,0,.5)">Shahnaz Qahramanova</div><div class="a" style="left:1110px;top:588px;width:168px;height:88px;overflow:hidden;background:#d8d0c0"><div class="a" style="left:-5px;top:-5px;width:125px;height:98px;background:radial-gradient(ellipse at 35% 10%,#f2eadc,#ddd4c4 50%,#cfc6b8);border-radius:0;filter:blur(2px);"></div><div class="a" style="left:114px;top:-4px;width:24px;height:62px;background:linear-gradient(90deg,#a86a3a,#c07e48 40%,#a86c3c);border-radius:0;filter:blur(1.2px);"></div><div class="a" style="left:137px;top:-4px;width:40px;height:34px;background:linear-gradient(90deg,#d8d6d4,#e4e2e0 50%,#d4d2d0);border-radius:0;filter:blur(1.5px);"></div><div class="a" style="left:132px;top:17px;width:44px;height:3.5px;background:#4a3428;border-radius:0;filter:blur(0.7px);transform:rotate(-16deg)"></div><div class="a" style="left:137px;top:26px;width:40px;height:20px;background:#d0ccca;border-radius:0;filter:blur(1.5px);"></div><div class="a" style="left:126px;top:42px;width:32px;height:30px;background:#1e1e24;border-radius:0;filter:blur(1px);"></div><div class="a" style="left:158px;top:42px;width:14px;height:28px;background:#26262c;border-radius:0;filter:blur(1px);"></div><div class="a" style="left:122px;top:66px;width:52px;height:12px;background:#c8c6cc;border-radius:0;filter:blur(1.5px);"></div><div class="a" style="left:140px;top:62px;width:10px;height:8px;background:#b8a8c0;border-radius:40%;filter:blur(1.5px);"></div><div class="a" style="left:120px;top:76px;width:54px;height:16px;background:#2c2a30;border-radius:0;filter:blur(1.5px);"></div><div class="a" style="left:60px;top:2px;width:56px;height:50px;background:#1e1e2a;border-radius:48% 48% 20% 20%;filter:blur(2px);"></div><div class="a" style="left:52px;top:40px;width:24px;height:56px;background:#1c1c28;border-radius:30% 30% 0 0;filter:blur(2px);"></div><div class="a" style="left:100px;top:36px;width:22px;height:56px;background:#1c1c28;border-radius:30% 30% 0 0;filter:blur(2px);"></div><div class="a" style="left:68px;top:12px;width:35px;height:52px;background:#c8a8a8;border-radius:45% 45% 50% 50%;filter:blur(1.5px);"></div><div class="a" style="left:68px;top:29px;width:17px;height:11px;background:rgba(160,190,220,.45);border-radius:40%;filter:blur(0.8px);border:1px solid #666"></div><div class="a" style="left:87px;top:29px;width:17px;height:11px;background:rgba(160,190,220,.45);border-radius:40%;filter:blur(0.8px);border:1px solid #666"></div><div class="a" style="left:80px;top:48px;width:12px;height:3px;background:#8a6a70;border-radius:40%;filter:blur(1px);"></div><div class="a" style="left:36px;top:68px;width:108px;height:30px;background:#c64a3a;border-radius:40% 40% 0 0;filter:blur(1.5px);"></div><div class="a" style="left:52px;top:62px;width:20px;height:36px;background:#1c1c28;border-radius:40%;filter:blur(2px);"></div><div class="a" style="left:102px;top:58px;width:18px;height:36px;background:#1c1c28;border-radius:40%;filter:blur(2px);"></div><div class="a" style="left:74px;top:62px;width:28px;height:16px;background:#c44838;border-radius:40%;filter:blur(1.5px);"></div></div>
</body></html>
